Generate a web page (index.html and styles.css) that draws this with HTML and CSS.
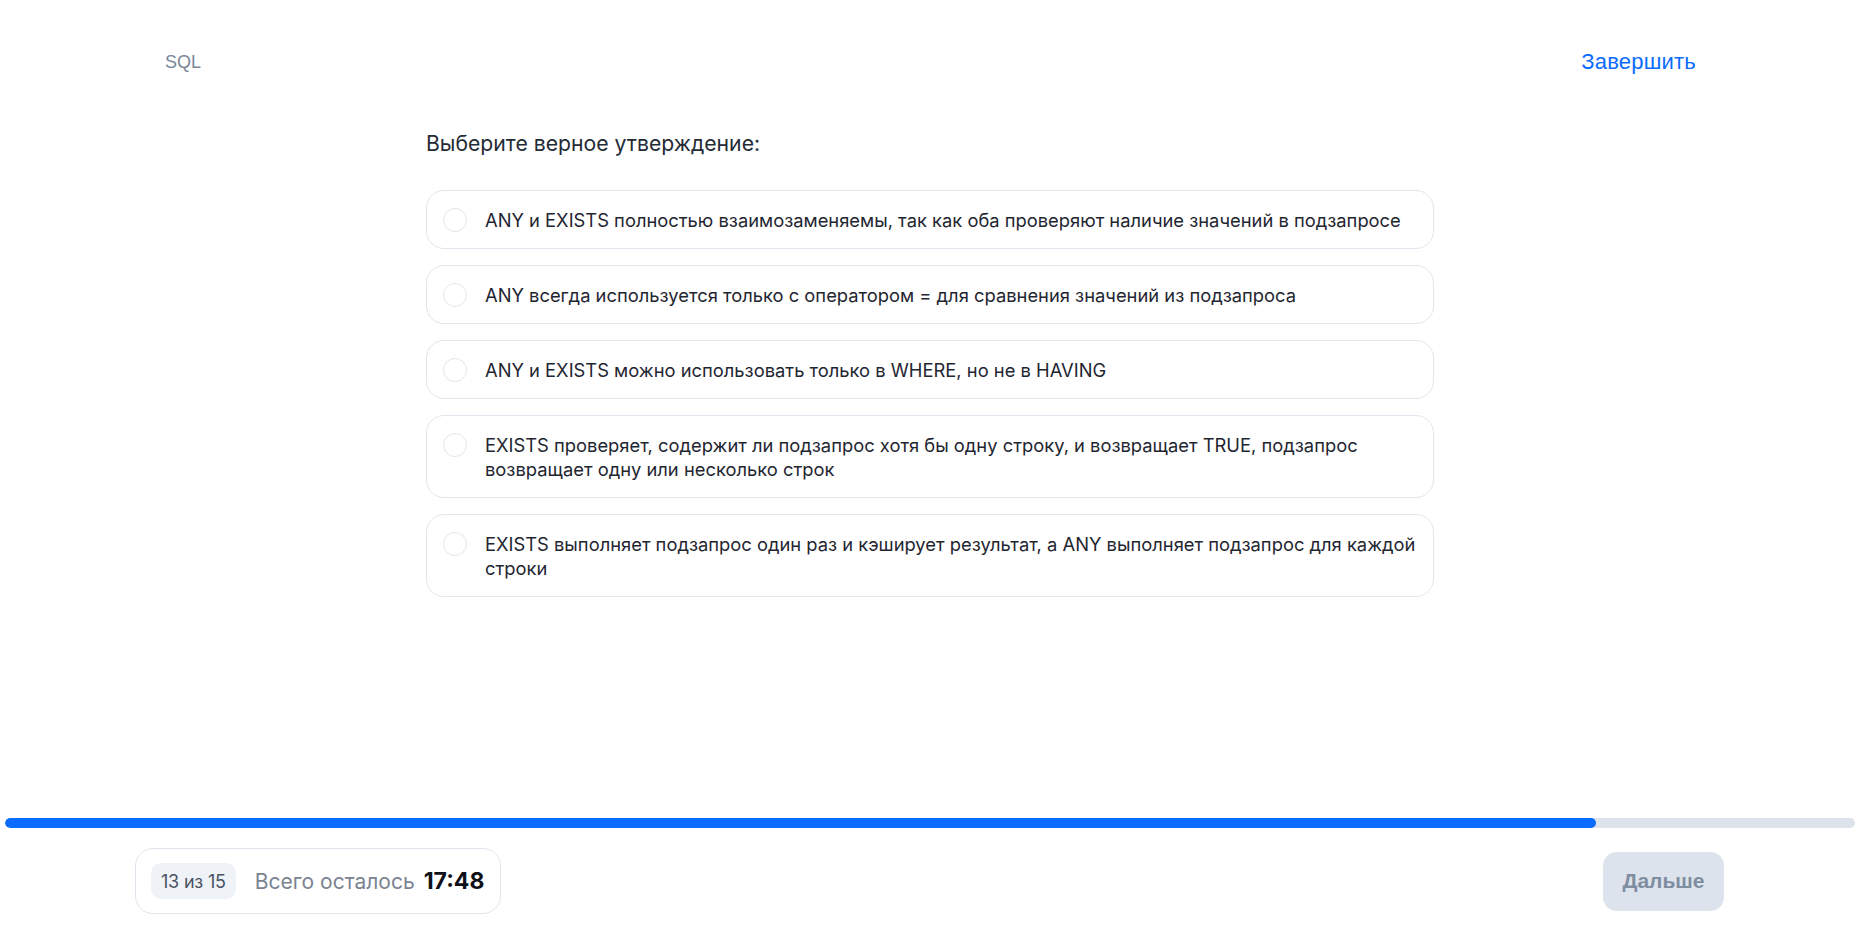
FILE: index.html
```html
<!DOCTYPE html>
<html lang="ru">
<head>
<meta charset="utf-8">
<title>SQL тест</title>
<link rel="stylesheet" href="styles.css">
</head>
<body>
<div class="page">
  <header class="topbar">
    <span class="topic">SQL</span>
    <a class="finish" href="#">Завершить</a>
  </header>

  <main class="content">
    <h1 class="question">Выберите верное утверждение:</h1>
    <ul class="options">
      <li class="option"><span class="radio"></span><span class="option-text">ANY и EXISTS полностью взаимозаменяемы, так как оба проверяют наличие значений в подзапросе</span></li>
      <li class="option"><span class="radio"></span><span class="option-text">ANY всегда используется только с оператором = для сравнения значений из подзапроса</span></li>
      <li class="option"><span class="radio"></span><span class="option-text">ANY и EXISTS можно использовать только в WHERE, но не в HAVING</span></li>
      <li class="option"><span class="radio"></span><span class="option-text">EXISTS проверяет, содержит ли подзапрос хотя бы одну строку, и возвращает TRUE, подзапрос возвращает одну или несколько строк</span></li>
      <li class="option"><span class="radio"></span><span class="option-text">EXISTS выполняет подзапрос один раз и кэширует результат, а ANY выполняет подзапрос для каждой строки</span></li>
    </ul>
  </main>

  <div class="progress"><div class="progress-fill" style="width: 86%"></div></div>

  <footer class="bottombar">
    <div class="status">
      <span class="counter">13 из 15</span>
      <span class="remaining">Всего осталось</span>
      <span class="timer">17:48</span>
    </div>
    <button class="next" type="button">Дальше</button>
  </footer>
</div>
</body>
</html>
```

FILE: styles.css
```css
* { box-sizing: border-box; }

html, body {
  margin: 0;
  padding: 0;
  background: #ffffff;
}

body {
  font-family: Inter, "Noto Sans", Arial, sans-serif;
  color: #222a36;
}

.page {
  display: flex;
  flex-direction: column;
  height: 100vh;
}

.topbar {
  display: flex;
  justify-content: space-between;
  align-items: center;
  padding: 50px 164px 0 165px;
  height: 74px;
  font-family: "Liberation Sans", Arial, sans-serif;
}

.topic {
  font-size: 18px;
  line-height: 24px;
  color: #7b8799;
}

.finish {
  font-size: 22px;
  line-height: 24px;
  letter-spacing: 0.2px;
  color: #0b6cff;
  text-decoration: none;
}

.content {
  flex: 1;
  width: 1008px;
  margin: 0 auto;
}

.question {
  margin: 55px 0 32px 0;
  font-size: 21.2px;
  line-height: 29px;
  font-weight: 400;
  color: #252b35;
}

.options {
  list-style: none;
  margin: 0;
  padding: 0;
  display: flex;
  flex-direction: column;
  gap: 16px;
}

.option {
  display: flex;
  align-items: flex-start;
  gap: 18px;
  padding: 16.5px 16px;
  border: 1px solid #e1e6ee;
  border-radius: 18px;
  font-size: 18.35px;
  line-height: 24px;
  color: #1f2631;
}

.radio {
  flex: none;
  width: 24px;
  height: 24px;
  border: 1.5px solid #e0e6ee;
  border-radius: 50%;
}

.option-text { flex: 1; }

.progress {
  margin: 0 5px;
  height: 10px;
  border-radius: 5px;
  background: #dde3eb;
  overflow: hidden;
}

.progress-fill {
  height: 100%;
  background: #0a6cff;
  border-radius: 5px;
}

.bottombar {
  display: flex;
  justify-content: space-between;
  align-items: center;
  padding: 20px 136px 21px 135px;
}

.status {
  display: flex;
  align-items: center;
  height: 66px;
  padding: 0 16px 0 15px;
  border: 1px solid #dfe5ed;
  border-radius: 18px;
}

.counter {
  height: 36px;
  display: flex;
  align-items: center;
  padding: 0 10px;
  border-radius: 10px;
  background: #eff3f8;
  font-size: 18px;
  color: #4a5262;
  letter-spacing: -0.2px;
}

.remaining {
  margin-left: 19px;
  font-size: 21px;
  color: #7a8391;
}

.timer {
  margin-left: 9px;
  font-size: 23px;
  font-weight: 700;
  color: #0e1116;
}

.next {
  width: 121px;
  height: 59px;
  border: none;
  border-radius: 14px;
  background: #dce3ec;
  color: #7f8da0;
  font-family: "Liberation Sans", Arial, sans-serif;
  font-size: 21px;
  font-weight: 700;
  padding: 0;
}
```
